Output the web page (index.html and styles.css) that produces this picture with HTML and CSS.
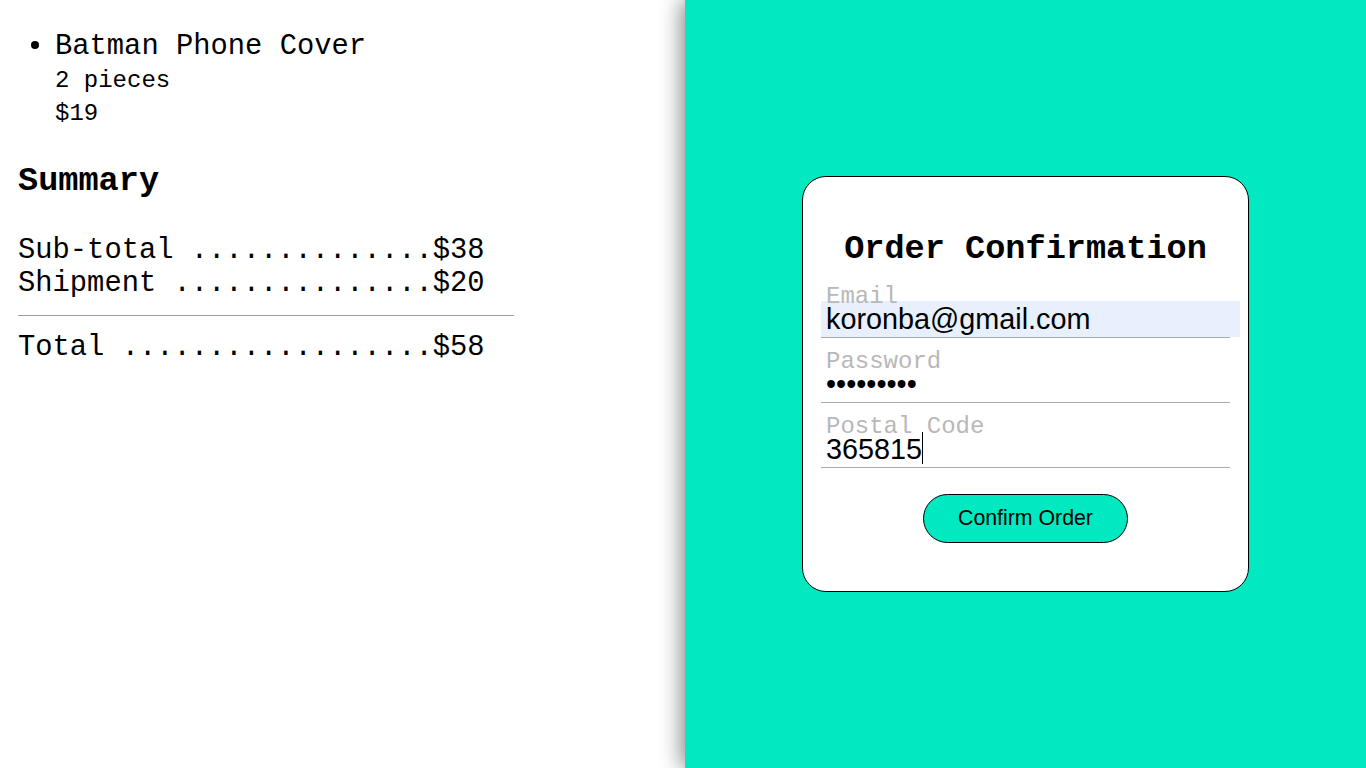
FILE: index.html
```html
<!DOCTYPE html>
<html lang="en">
<head>
<meta charset="utf-8">
<title>Order Confirmation</title>
<link rel="stylesheet" href="styles.css">
</head>
<body>
<div class="page">
  <section class="cart">
    <ul class="items">
      <li class="item">
        <div class="item-name">Batman Phone Cover</div>
        <div class="item-qty">2 pieces</div>
        <div class="item-price">$19</div>
      </li>
    </ul>
    <h2 class="summary-title">Summary</h2>
    <div class="summary-rows">
      <div class="row">Sub-total ..............$38</div>
      <div class="row">Shipment ...............$20</div>
    </div>
    <hr class="divider">
    <div class="row">Total ..................$58</div>
  </section>
  <section class="checkout">
    <form class="card">
      <h1 class="card-title">Order Confirmation</h1>
      <div class="field">
        <label class="field-label" for="email">Email</label>
        <input class="field-input autofilled" id="email" type="email" value="koronba@gmail.com">
      </div>
      <div class="field">
        <label class="field-label" for="password">Password</label>
        <input class="field-input" id="password" type="password" value="123456789">
      </div>
      <div class="field">
        <label class="field-label" for="postal">Postal Code</label>
        <div class="input-wrap">
          <input class="field-input" id="postal" type="text" value="365815">
          <span class="caret"></span>
        </div>
      </div>
      <div class="actions">
        <button class="confirm" type="button">Confirm Order</button>
      </div>
    </form>
  </section>
</div>
</body>
</html>
```

FILE: styles.css
```css
html, body {
  margin: 0;
  padding: 0;
  height: 100%;
}

body {
  font-family: "Liberation Mono", "Courier New", monospace;
  color: #000;
  background: #fff;
}

.page {
  display: flex;
  height: 768px;
}

.cart {
  flex: 0 0 685px;
  box-sizing: border-box;
  padding: 30px 0 0 18px;
}

.items {
  margin: 0;
  padding-left: 37px;
  list-style: none;
}

.item {
  position: relative;
}

.item::before {
  content: "";
  position: absolute;
  left: -24px;
  top: 11px;
  width: 8px;
  height: 8px;
  border-radius: 50%;
  background: #000;
}

.item-name {
  font-size: 28.8px;
}

.item-qty {
  font-size: 24px;
  margin-top: 4px;
}

.item-price {
  font-size: 24px;
  margin-top: 6px;
}

.summary-title {
  font-size: 33.6px;
  font-weight: bold;
  margin: 35px 0 0;
  line-height: normal;
}

.summary-rows {
  margin-top: 34px;
}

.row {
  font-size: 28.8px;
  white-space: pre;
}

.divider {
  width: 496px;
  margin: 15px 0 15px;
  border: none;
  border-top: 1px solid #a0a0a0;
  height: 0;
}

.checkout {
  flex: 1 1 auto;
  background: #00e9c0;
  box-shadow: -4px 0 20px rgba(0, 0, 0, 0.45);
  display: flex;
  align-items: center;
  justify-content: center;
}

.card {
  width: 409px;
  background: #fff;
  border: 1px solid #000;
  border-radius: 24px;
  padding: 53px 18px 48px;
}

.card-title {
  margin: 0 0 23px;
  font-size: 33.6px;
  font-weight: bold;
  line-height: normal;
  text-align: center;
}

.field {
  border-bottom: 1px solid #aaa;
}

.field + .field {
  margin-top: 18px;
}

.field-label {
  display: block;
  font-size: 24px;
  line-height: 12px;
  margin-bottom: -2px;
  color: #b8b8b8;
  padding-left: 5px;
}

.input-wrap {
  position: relative;
}

.field-input {
  display: block;
  width: 100%;
  box-sizing: content-box;
  border: none;
  outline: none;
  margin: 0;
  padding: 2px 5px 2px;
  font-family: "Liberation Sans", Arial, sans-serif;
  font-size: 28.8px;
  line-height: normal;
  height: 32px;
  color: #000;
  background: transparent;
}

.autofilled {
  background: #e8f0fe;
}

.caret {
  position: absolute;
  left: 101px;
  top: 1px;
  width: 1px;
  height: 32px;
  background: #000;
}

.actions {
  display: flex;
  justify-content: center;
  margin-top: 26px;
}

.confirm {
  font-family: "Liberation Sans", Arial, sans-serif;
  font-size: 21.3px;
  color: #000;
  background: #00e9c0;
  border: 1px solid #000;
  border-radius: 25px;
  width: 205px;
  height: 49px;
  padding: 0;
  cursor: pointer;
}
```
